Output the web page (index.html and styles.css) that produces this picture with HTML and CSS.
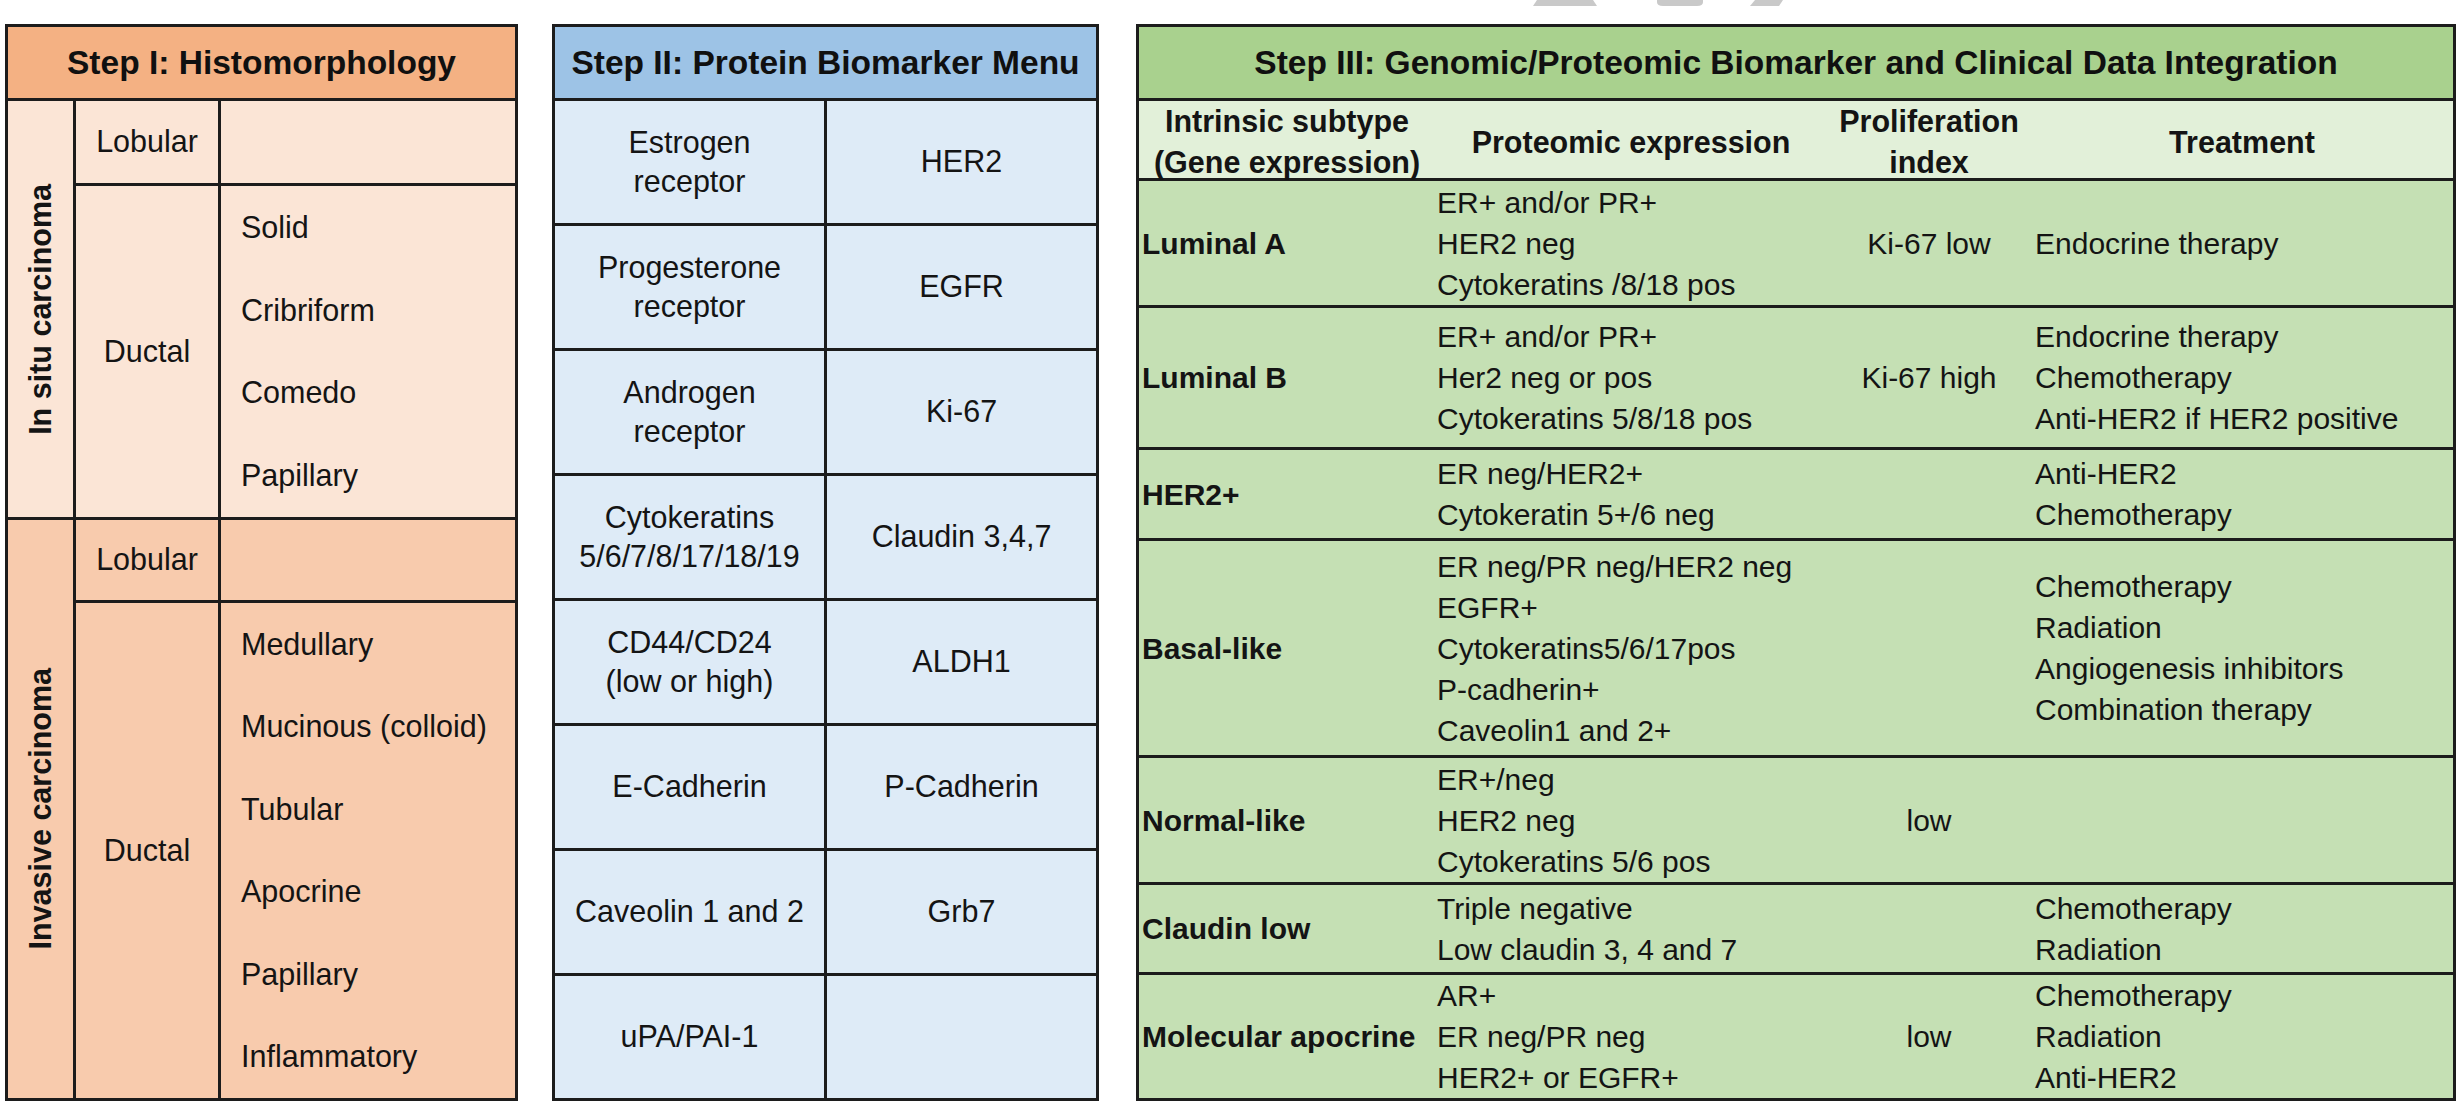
FILE: index.html
```html
<!DOCTYPE html>
<html lang="en">
<head>
<meta charset="utf-8">
<title>Breast cancer classification steps</title>
<link rel="stylesheet" href="styles.css">
</head>
<body>
<div class="page">
  <svg class="watermark" width="260" height="8" viewBox="0 0 260 8" aria-hidden="true">
    <polygon points="4,0 60,0 64,6 0,6" fill="#c9c9c9"/>
    <path d="M124 0 H170 V2 Q170 6 164 6 H130 Q124 6 124 2 Z" fill="#c9c9c9"/>
    <polygon points="222,0 250,0 246,6 217,6" fill="#c9c9c9"/>
  </svg>

  <section class="panel panel-histo">
    <div class="head head-orange">Step I: Histomorphology</div>

    <div class="cell insitu vlabel"><span>In situ carcinoma</span></div>
    <div class="cell insitu centered">Lobular</div>
    <div class="cell insitu"></div>
    <div class="cell insitu centered">Ductal</div>
    <div class="cell insitu sublist">
      <span>Solid</span><span>Cribriform</span><span>Comedo</span><span>Papillary</span>
    </div>

    <div class="cell invasive vlabel"><span>Invasive carcinoma</span></div>
    <div class="cell invasive centered">Lobular</div>
    <div class="cell invasive"></div>
    <div class="cell invasive centered">Ductal</div>
    <div class="cell invasive sublist">
      <span>Medullary</span><span>Mucinous (colloid)</span><span>Tubular</span><span>Apocrine</span><span>Papillary</span><span>Inflammatory</span>
    </div>
  </section>

  <section class="panel panel-protein">
    <div class="head head-blue">Step II: Protein Biomarker Menu</div>
    <div class="cell blue centered">Estrogen<br>receptor</div>
    <div class="cell blue centered">HER2</div>
    <div class="cell blue centered">Progesterone<br>receptor</div>
    <div class="cell blue centered">EGFR</div>
    <div class="cell blue centered">Androgen<br>receptor</div>
    <div class="cell blue centered">Ki-67</div>
    <div class="cell blue centered">Cytokeratins<br>5/6/7/8/17/18/19</div>
    <div class="cell blue centered">Claudin 3,4,7</div>
    <div class="cell blue centered">CD44/CD24<br>(low or high)</div>
    <div class="cell blue centered">ALDH1</div>
    <div class="cell blue centered">E-Cadherin</div>
    <div class="cell blue centered">P-Cadherin</div>
    <div class="cell blue centered">Caveolin 1 and 2</div>
    <div class="cell blue centered">Grb7</div>
    <div class="cell blue centered">uPA/PAI-1</div>
    <div class="cell blue"></div>
  </section>

  <section class="panel panel-genomic">
    <div class="head head-green">Step III: Genomic/Proteomic Biomarker and Clinical Data Integration</div>

    <div class="g-row g-sub">
      <div class="g-th">Intrinsic subtype<br>(Gene expression)</div>
      <div class="g-th">Proteomic expression</div>
      <div class="g-th">Proliferation<br>index</div>
      <div class="g-th">Treatment</div>
    </div>

    <div class="g-row">
      <div class="g-label">Luminal A</div>
      <div class="g-prot"><span>ER+ and/or PR+</span><span>HER2 neg</span><span>Cytokeratins /8/18 pos</span></div>
      <div class="g-prolif">Ki-67 low</div>
      <div class="g-treat"><span>Endocrine therapy</span></div>
    </div>

    <div class="g-row">
      <div class="g-label">Luminal B</div>
      <div class="g-prot"><span>ER+ and/or PR+</span><span>Her2 neg or pos</span><span>Cytokeratins 5/8/18 pos</span></div>
      <div class="g-prolif">Ki-67 high</div>
      <div class="g-treat"><span>Endocrine therapy</span><span>Chemotherapy</span><span>Anti-HER2 if HER2 positive</span></div>
    </div>

    <div class="g-row">
      <div class="g-label">HER2+</div>
      <div class="g-prot"><span>ER neg/HER2+</span><span>Cytokeratin 5+/6 neg</span></div>
      <div class="g-prolif"></div>
      <div class="g-treat"><span>Anti-HER2</span><span>Chemotherapy</span></div>
    </div>

    <div class="g-row">
      <div class="g-label">Basal-like</div>
      <div class="g-prot"><span>ER neg/PR neg/HER2 neg</span><span>EGFR+</span><span>Cytokeratins5/6/17pos</span><span>P-cadherin+</span><span>Caveolin1 and 2+</span></div>
      <div class="g-prolif"></div>
      <div class="g-treat"><span>Chemotherapy</span><span>Radiation</span><span>Angiogenesis inhibitors</span><span>Combination therapy</span></div>
    </div>

    <div class="g-row">
      <div class="g-label">Normal-like</div>
      <div class="g-prot"><span>ER+/neg</span><span>HER2 neg</span><span>Cytokeratins 5/6 pos</span></div>
      <div class="g-prolif">low</div>
      <div class="g-treat"></div>
    </div>

    <div class="g-row">
      <div class="g-label">Claudin low</div>
      <div class="g-prot"><span>Triple negative</span><span>Low claudin 3, 4 and 7</span></div>
      <div class="g-prolif"></div>
      <div class="g-treat"><span>Chemotherapy</span><span>Radiation</span></div>
    </div>

    <div class="g-row">
      <div class="g-label">Molecular apocrine</div>
      <div class="g-prot"><span>AR+</span><span>ER neg/PR neg</span><span>HER2+ or EGFR+</span></div>
      <div class="g-prolif">low</div>
      <div class="g-treat"><span>Chemotherapy</span><span>Radiation</span><span>Anti-HER2</span></div>
    </div>
  </section>
</div>
</body>
</html>
```

FILE: styles.css
```css
* { box-sizing: border-box; }

html, body {
  margin: 0;
  padding: 0;
  background: #ffffff;
}

body {
  font-family: "Liberation Sans", Arial, "Helvetica", sans-serif;
  color: #141414;
  font-size: 30.5px;
}

.page {
  position: relative;
  display: flex;
  align-items: flex-start;
  padding: 24px 0 0 5px;
  width: 2461px;
  height: 1107px;
}

.watermark {
  position: absolute;
  top: 0;
  left: 1533px;
}

.panel {
  height: 1077px;
  border: 3px solid #1c1c1c;
  background: #1c1c1c;
  display: grid;
  gap: 3px;
}

.head {
  grid-column: 1 / -1;
  display: flex;
  align-items: center;
  justify-content: center;
  font-weight: bold;
  font-size: 33.5px;
  color: #101010;
}

.head-orange { background: #f4b183; }
.head-blue { background: #9dc3e6; }
.head-green { background: #a9d18e; }

.cell {
  display: flex;
  align-items: center;
}

.centered {
  justify-content: center;
  text-align: center;
  line-height: 39.5px;
}

/* Step I */
.panel-histo {
  width: 513px;
  grid-template-columns: 65px 142px 1fr;
  grid-template-rows: 71px 82px 331px 80px 1fr;
}

.insitu { background: #fbe5d6; }
.invasive { background: #f8cbad; }

.vlabel {
  grid-row: span 2;
  justify-content: center;
}

.vlabel span {
  writing-mode: vertical-rl;
  transform: rotate(180deg);
  font-weight: bold;
  white-space: nowrap;
}

.sublist {
  flex-direction: column;
  align-items: stretch;
  padding-left: 20px;
}

.sublist span {
  flex: 1;
  display: flex;
  align-items: center;
}

/* Step II */
.panel-protein {
  width: 547px;
  margin-left: 34px;
  grid-template-columns: 1fr 1fr;
  grid-template-rows: 71px repeat(8, 1fr);
}

.blue { background: #deebf7; }

/* Step III */
.panel-genomic {
  width: 1320px;
  margin-left: 37px;
  grid-template-columns: 1fr;
  grid-template-rows: 71px 77px 124px 139px 88px 214px 124px 87px 1fr;
  font-size: 30px;
}

.g-row {
  display: grid;
  grid-template-columns: 296px 392px 204px 1fr;
  background: #c5e0b4;
  line-height: 41px;
}

.g-sub { background: #e2f0d9; }

.g-th {
  display: flex;
  align-items: center;
  justify-content: center;
  text-align: center;
  font-weight: bold;
  font-size: 30.5px;
}

.g-label {
  display: flex;
  align-items: center;
  padding-left: 3px;
  font-weight: bold;
}

.g-prot,
.g-treat {
  display: flex;
  flex-direction: column;
  justify-content: center;
  white-space: nowrap;
}

.g-prot { padding-left: 2px; }
.g-treat { padding-left: 4px; }

.g-prolif {
  display: flex;
  align-items: center;
  justify-content: center;
}
```
